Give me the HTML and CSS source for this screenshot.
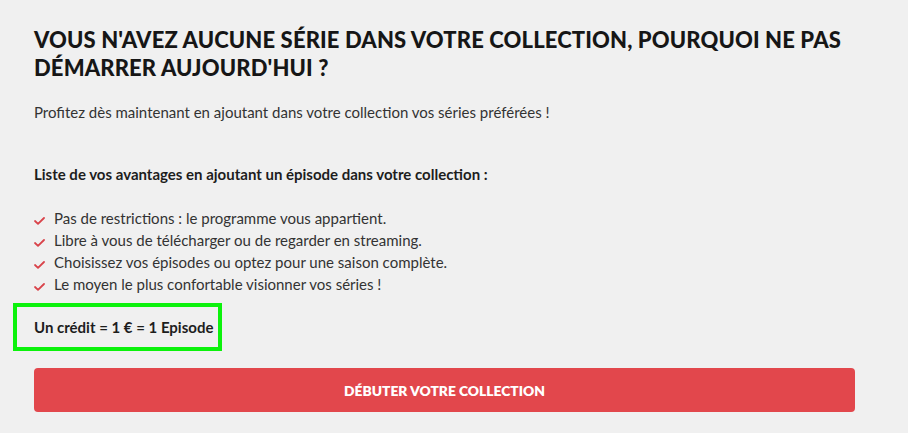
FILE: index.html
```html
<!DOCTYPE html>
<html lang="fr">
<head>
<meta charset="UTF-8">
<meta name="viewport" content="width=device-width, initial-scale=1.0">
<title>Ma collection</title>
<link rel="stylesheet" href="styles.css">
</head>
<body>
<div class="container">
    <h1>Vous n'avez aucune série dans votre collection, pourquoi ne pas démarrer aujourd'hui ?</h1>
    <p class="intro">Profitez dès maintenant en ajoutant dans votre collection vos séries préférées !</p>

    <p class="list-title">Liste de vos avantages en ajoutant un épisode dans votre collection :</p>
    <ul class="benefits">
        <li>Pas de restrictions : le programme vous appartient.</li>
        <li>Libre à vous de télécharger ou de regarder en streaming.</li>
        <li>Choisissez vos épisodes ou optez pour une saison complète.</li>
        <li>Le moyen le plus confortable visionner vos séries !</li>
    </ul>

    <p class="credit">Un crédit = 1 € = 1 Episode</p>

    <button class="start">Débuter votre collection</button>
</div>
</body>
</html>
```

FILE: styles.css
```css
body {
    font-family: Lato, "Liberation Sans", sans-serif;
    margin: 0;
    padding: 0;
    background-color: #f0f0f0;
    color: #333;
}
.container {
    width: 821px;
    padding: 26px 0 0 34px;
}
h1 {
    font-size: 22px;
    font-weight: 900;
    line-height: 28px;
    letter-spacing: 0.13px;
    color: #161616;
    text-transform: uppercase;
    margin: 0 0 20px;
}
.intro {
    font-size: 15px;
    line-height: 20px;
    margin: 0 0 42px;
}
.list-title {
    font-size: 15px;
    font-weight: 700;
    line-height: 20px;
    color: #1d1d1d;
    margin: 0 0 23px;
}
.benefits {
    list-style: none;
    margin: 0 0 8px;
    padding: 0;
}
.benefits li {
    font-size: 15px;
    line-height: 22px;
    padding-left: 20px;
    background-image: url("data:image/svg+xml,%3Csvg xmlns='http://www.w3.org/2000/svg' width='11' height='8' viewBox='0 0 11 8'%3E%3Cpath d='M1 4 L4 6.8 L10 1' fill='none' stroke='%23d9434a' stroke-width='1.8' stroke-linecap='round' stroke-linejoin='round'/%3E%3C/svg%3E");
    background-repeat: no-repeat;
    background-position: 0 10px;
}
.credit {
    display: inline-block;
    font-size: 15px;
    font-weight: 700;
    line-height: 20px;
    color: #1d1d1d;
    margin: 0 0 17px -21px;
    padding: 10px 5px 10px 17px;
    border: 4px solid #0cf20c;
}
.start {
    display: block;
    width: 100%;
    height: 44px;
    font-family: Lato, "Liberation Sans", sans-serif;
    font-size: 13.8px;
    font-weight: 800;
    color: #fff;
    text-transform: uppercase;
    background-color: #e2474c;
    border: none;
    border-radius: 4px;
    cursor: pointer;
}
```
